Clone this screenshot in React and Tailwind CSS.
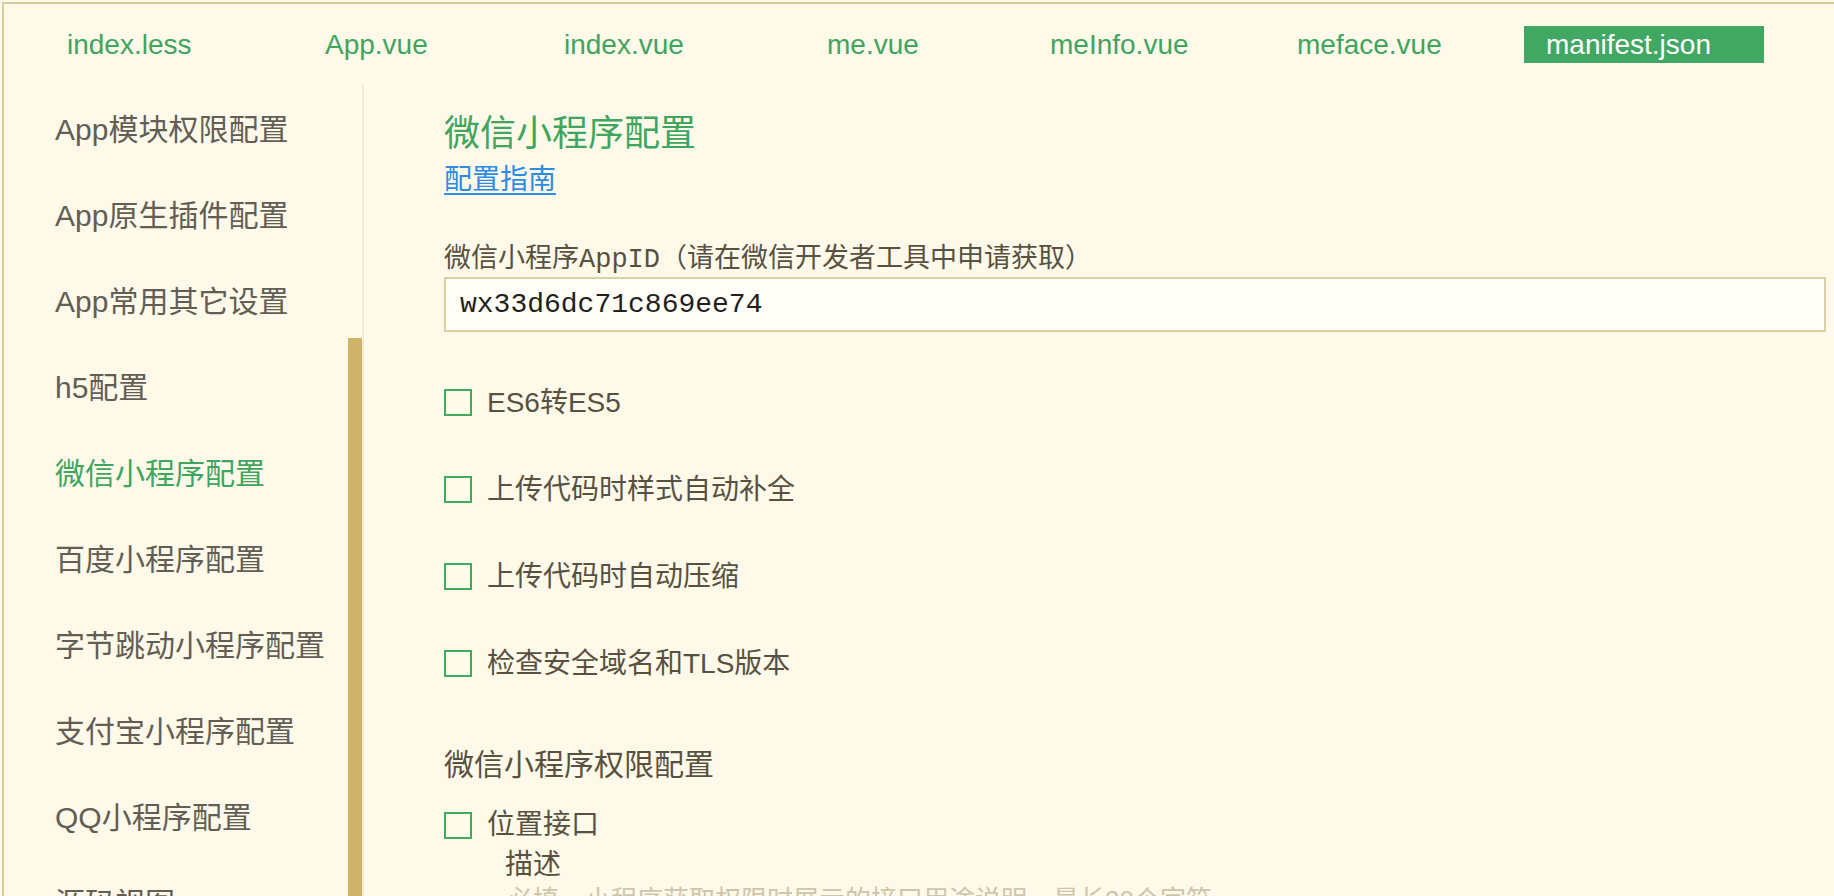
import React from "react";

const tabs = [
  { name: "index.less", w: "w-[258px]" },
  { name: "App.vue", w: "w-[239px]" },
  { name: "index.vue", w: "w-[263px]" },
  { name: "me.vue", w: "w-[223px]" },
  { name: "meInfo.vue", w: "w-[247px]" },
  { name: "meface.vue", w: "w-[249px]" },
  { name: "manifest.json", w: "w-[240px]", active: true },
];

const menu = [
  "App模块权限配置",
  "App原生插件配置",
  "App常用其它设置",
  "h5配置",
  "微信小程序配置",
  "百度小程序配置",
  "字节跳动小程序配置",
  "支付宝小程序配置",
  "QQ小程序配置",
  "源码视图",
];

const options = [
  "ES6转ES5",
  "上传代码时样式自动补全",
  "上传代码时自动压缩",
  "检查安全域名和TLS版本",
];

const sans = "font-['Liberation_Sans','Noto_Sans_CJK_SC',sans-serif]";
const mono = "font-['Liberation_Mono','Noto_Sans_CJK_SC',monospace]";

function Box() {
  return <span className="h-[27px] w-[28px] shrink-0 border-2 border-[#3eaa5e]" />;
}

export default function App() {
  return (
    <div className={`h-[896px] w-full overflow-hidden bg-[#fef9e8] pl-[2px] pt-[2px] ${sans}`}>
      <div className="flex h-full flex-col border-l-2 border-t-2 border-[#d9cd9f]">
        {/* ---------- TABS ---------- */}
        <nav className="flex h-[80px] shrink-0 items-start pl-[41px] pt-[22px]">
          {tabs.map((t) => (
            <div
              key={t.name}
              className={`${t.w} flex h-[37px] items-center pl-[22px] text-[28px] leading-none ${
                t.active ? "bg-[#41a863] text-white" : "text-[#3fa55f]"
              }`}
            >
              {t.name}
            </div>
          ))}
        </nav>

        <div className="flex min-h-0 flex-1">
          {/* ---------- SIDEBAR ---------- */}
          <aside className="flex w-[360px] shrink-0 border-r-2 border-[#f4ebce]">
            <ul className="flex-1 pl-[51px] pt-[2px]">
              {menu.map((m) => (
                <li
                  key={m}
                  className={`flex h-[86px] items-center text-[30px] ${
                    m === "微信小程序配置" ? "text-[#3fa55f]" : "text-[#625e55]"
                  }`}
                >
                  {m}
                </li>
              ))}
            </ul>
            <div className="w-[14px] pt-[254px]">
              <div className="h-full bg-[#cdb46a]" />
            </div>
          </aside>

          {/* ---------- MAIN ---------- */}
          <main className="flex-1 pl-[80px] pr-[8px]">
            <h1 className="mt-[28px] h-[44px] text-[36px] leading-[44px] text-[#3fa55f]">
              微信小程序配置
            </h1>
            <a className="mt-[7px] inline-block text-[28px] leading-[34px] text-[#2d8ce3] underline underline-offset-[4px]">
              配置指南
            </a>
            <div className={`mt-[46px] h-[34px] text-[27px] leading-[34px] text-[#585141] ${mono}`}>
              微信小程序AppID（请在微信开发者工具中申请获取）
            </div>
            <div className={`flex h-[55px] items-center border-2 border-[#dcd0a6] bg-[#fffdf6] pl-[14px] text-[28px] text-[#1f1f1f] ${mono}`}>
              wx33d6dc71c869ee74
            </div>

            <div className="mt-[27px]">
              {options.map((o) => (
                <div key={o} className="flex h-[87px] items-center gap-[15px] text-[28px] text-[#585141]">
                  <Box />
                  <span>{o}</span>
                </div>
              ))}
            </div>

            <div className="mt-[37px] flex h-[40px] items-center text-[30px] text-[#585141]">
              微信小程序权限配置
            </div>
            <div className="mt-[21px] flex h-[40px] items-center gap-[15px] text-[28px] text-[#585141]">
              <Box />
              <span>位置接口</span>
            </div>
            <div className="flex h-[40px] items-center pl-[61px] text-[28px] text-[#585141]">描述</div>
            <div className="flex h-[28px] items-end pl-[63px] text-[26px] leading-none text-[#cdc5ad]">
              必填，小程序获取权限时展示的接口用途说明，最长30个字符
            </div>
          </main>
        </div>
      </div>
    </div>
  );
}
